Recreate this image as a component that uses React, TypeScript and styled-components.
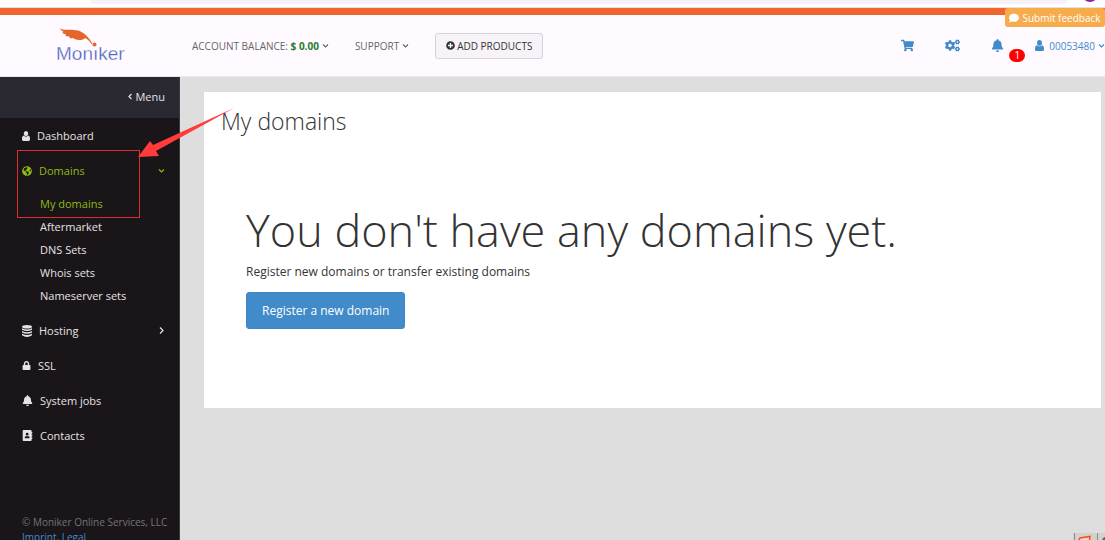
import React from "react";
import styled, { createGlobalStyle } from "styled-components";
import {
  FaAddressBook,
  FaBell,
  FaCogs,
  FaComment,
  FaGlobeAmericas,
  FaLock,
  FaPlusCircle,
  FaShoppingCart,
} from "react-icons/fa";

const GlobalStyle = createGlobalStyle`
  *, *::before, *::after { box-sizing: border-box; }
  body {
    margin: 0;
    font-family: "Open Sans", "Noto Sans", sans-serif;
    font-size: 12px;
    color: #333;
    background: #dedede;
  }
  button { font-family: inherit; cursor: pointer; }
  a { text-decoration: none; }
  svg { flex: none; }
`;

const Page = styled.div`
  position: relative;
  height: 100vh;
  overflow: hidden;
  display: flex;
  flex-direction: column;
`;

const BrowserEdge = styled.div`
  flex: none;
  display: flex;
  align-items: flex-start;
  height: 8px;
  padding: 0 2px 0 90px;
  overflow: hidden;
  background: #fff;
  border-bottom: 1px solid #e6dfdf;
`;

const AddressBar = styled.div`
  flex: 1;
  height: 4px;
  background: #f6f2f7;
  border-radius: 0 0 8px 8px;
`;

const Avatar = styled.span`
  width: 16px;
  height: 16px;
  margin: -14px 5px 0 14px;
  border-radius: 50%;
  background: #8e24aa;
`;

const Header = styled.header`
  flex: none;
  display: flex;
  align-items: center;
  height: 69px;
  padding-left: 56px;
  border-top: 7px solid #f0642f;
  border-bottom: 1px solid #ebe8ec;
  background: #fefaff;
`;

const LogoLink = styled.a`
  display: block;
  width: 68px;
  height: 38px;
  margin-right: 68px;
  svg { display: block; overflow: visible; }
`;

const HeaderLink = styled.a`
  display: flex;
  align-items: center;
  gap: 3px;
  margin-right: 26px;
  font-size: 10px;
  white-space: nowrap;
  color: #666;
  strong { color: #2a7a2e; }
`;

const AddButton = styled.button`
  display: flex;
  align-items: center;
  gap: 2px;
  height: 26px;
  padding: 0 10px;
  font-size: 10px;
  white-space: nowrap;
  color: #333;
  background: #f7f3f8;
  border: 1px solid #d6d2d7;
  border-radius: 3px;
`;

const Tools = styled.nav`
  display: flex;
  align-items: center;
  margin-left: auto;
  color: #428bca;
`;

const ToolButton = styled.button`
  position: relative;
  display: flex;
  padding: 0;
  margin-right: 31px;
  border: 0;
  background: none;
  color: inherit;
`;

const Badge = styled.span`
  position: absolute;
  top: 10px;
  left: 18px;
  width: 16px;
  height: 13px;
  border-radius: 7px;
  background: #f00;
  color: #fff;
  font-size: 10px;
  line-height: 13px;
  text-align: center;
`;

const Account = styled.a`
  display: flex;
  align-items: center;
  font-size: 10px;
  color: #428bca;
  span { margin: 0 3px 0 5px; }
`;

const Feedback = styled.button`
  position: absolute;
  top: 8px;
  right: 0;
  display: flex;
  align-items: center;
  justify-content: center;
  gap: 3px;
  width: 100px;
  height: 19px;
  padding: 0;
  font-size: 10px;
  white-space: nowrap;
  color: #fff;
  background: #f6ac4c;
  border: 0;
  border-radius: 3px;
`;

const Body = styled.div`
  flex: 1;
  display: flex;
  min-height: 0;
`;

const Sidebar = styled.aside`
  flex: none;
  width: 180px;
  background: #1a1518;
  border-right: 1px solid #3d393d;
  color: #e6e2e6;
`;

const Collapse = styled.button`
  display: flex;
  align-items: center;
  justify-content: flex-end;
  gap: 1px;
  width: 100%;
  height: 41px;
  padding: 0 14px 2px;
  font-size: 11px;
  color: #e6e2e6;
  background: #2a2831;
  border: 0;
`;

const MenuItem = styled.a<{ $active?: boolean }>`
  display: flex;
  align-items: center;
  gap: 7px;
  height: 35px;
  padding: 0 14px 0 22px;
  font-size: 11px;
  color: ${(p) => (p.$active ? "#8fbc0f" : "#e6e2e6")};
  svg:last-child { margin-left: auto; }
`;

const SubMenu = styled.div`
  padding: 4px 0 6px;
`;

const SubItem = styled.a<{ $active?: boolean }>`
  display: block;
  padding-left: 40px;
  font-size: 11px;
  line-height: 23px;
  color: ${(p) => (p.$active ? "#8fbc0f" : "#e6e2e6")};
`;

const Legal = styled.footer`
  padding: 62px 0 0 22px;
  font-size: 10px;
  line-height: 15px;
  white-space: nowrap;
  color: #77737a;
  a { color: #428bca; }
`;

const Main = styled.main`
  flex: 1;
  min-width: 0;
  padding: 15px 4px 0 24px;
`;

const Card = styled.section`
  padding: 11px 17px 79px;
  background: #fff;
`;

const Title = styled.h1`
  margin: 0;
  font-size: 23px;
  font-weight: 300;
  line-height: 36px;
`;

const Empty = styled.div`
  padding: 57px 25px 0;
`;

const Lead = styled.h2`
  margin: 0;
  font-size: 45px;
  font-weight: 300;
  line-height: 68px;
`;

const Hint = styled.p`
  margin: 0 0 12px;
  font-size: 12px;
  line-height: 16px;
`;

const Primary = styled.button`
  height: 37px;
  padding: 0 15px;
  font-size: 12px;
  color: #fff;
  background: #428bca;
  border: 1px solid #3d86c6;
  border-radius: 3px;
`;

const Highlight = styled.div`
  position: absolute;
  top: 150px;
  left: 17px;
  width: 123px;
  height: 68px;
  border: 1px solid #d8302f;
  pointer-events: none;
`;

const Arrow = styled.svg`
  position: absolute;
  top: 108px;
  left: 137px;
  pointer-events: none;
`;

const TrayCorner = styled.div`
  position: absolute;
  right: 0;
  bottom: 0;
  width: 32px;
  height: 7px;
  overflow: hidden;
  svg { display: block; }
`;

const subItems = ["My domains", "Aftermarket", "DNS Sets", "Whois sets", "Nameserver sets"];

function Logo() {
  return (
    <svg width="68" height="38" viewBox="0 0 68 38" role="img" aria-label="Moniker">
      <path
        d="M3.500 1.500 C9 4 15 1.500 22 3.500 C28 5.500 32.500 9.500 36.500 17 L35.500 17 C33.500 14 31.500 12 29 11 C27 13.500 22 13.500 18.500 12 L17 11 L14.500 11.500 L13 9.500 L9.500 9 L10 7.500 L6 6 L7.500 5 Z"
        fill="#e5662b"
      />
      <circle cx="38.500" cy="17.500" r="2" fill="#e5662b" />
      <text
        x="0"
        y="33"
        fontFamily="Liberation Sans, Arial, sans-serif"
        fontSize="19"
        fill="#4a63bb"
        stroke="#fefaff"
        strokeWidth="0.300"
      >
        Monıker
      </text>
    </svg>
  );
}

const chevrons = {
  down: "M1 2.500 L3.500 5 L6 2.500",
  left: "M4.500 1 L2 3.500 L4.500 6",
  right: "M2 0.500 L5 3.500 L2 6.500",
};

function Chevron({ to }: { to: keyof typeof chevrons }) {
  return (
    <svg width="7" height="7" viewBox="0 0 7 7" aria-hidden="true">
      <path d={chevrons[to]} fill="none" stroke="currentColor" strokeWidth="1.200" />
    </svg>
  );
}

function Person({ size }: { size: number }) {
  return (
    <svg width={size} height={(size * 10) / 8} viewBox="0 0 8 10" fill="currentColor" aria-hidden="true">
      <ellipse cx="4" cy="2.600" rx="2.200" ry="2.600" />
      <path d="M1.700 4.600 C2.800 6 5.200 6 6.300 4.600 C7.700 4.900 8 6.500 8 8.300 Q8 10 6.700 10 H1.300 Q0 10 0 8.300 C0 6.500 0.300 4.900 1.700 4.600Z" />
    </svg>
  );
}

function Discs() {
  return (
    <svg width="10" height="12" viewBox="0 0 10 12" fill="currentColor" aria-hidden="true">
      <ellipse cx="5" cy="1.800" rx="5" ry="1.800" />
      <path d="M0 3.200 Q5 5.800 10 3.200 V4.700 Q5 7.300 0 4.700Z M0 6 Q5 8.600 10 6 V7.500 Q5 10.100 0 7.500Z M0 8.800 Q5 11.400 10 8.800 V10.300 Q5 13.500 0 10.300Z" />
    </svg>
  );
}

export default function App() {
  return (
    <Page>
      <GlobalStyle />
      <BrowserEdge>
        <AddressBar />
        <Avatar />
      </BrowserEdge>
      <Header>
        <LogoLink href="#home">
          <Logo />
        </LogoLink>
        <HeaderLink href="#balance">
          <span>
            ACCOUNT BALANCE: <strong>$ 0.00</strong>
          </span>
          <Chevron to="down" />
        </HeaderLink>
        <HeaderLink href="#support">
          <span>SUPPORT</span>
          <Chevron to="down" />
        </HeaderLink>
        <AddButton type="button">
          <FaPlusCircle size={9} />
          ADD PRODUCTS
        </AddButton>
        <Tools aria-label="Account">
          <ToolButton type="button" aria-label="Cart">
            <FaShoppingCart size={13} />
          </ToolButton>
          <ToolButton type="button" aria-label="Settings">
            <FaCogs size={15} />
          </ToolButton>
          <ToolButton type="button" aria-label="Notifications">
            <FaBell size={13} />
            <Badge>1</Badge>
          </ToolButton>
          <Account href="#account">
            <Person size={9} />
            <span>00053480</span>
            <Chevron to="down" />
          </Account>
        </Tools>
      </Header>
      <Body>
        <Sidebar>
          <Collapse type="button">
            <Chevron to="left" />
            Menu
          </Collapse>
          <nav aria-label="Main">
            <MenuItem href="#dashboard">
              <Person size={8} />
              <span>Dashboard</span>
            </MenuItem>
            <MenuItem href="#domains" $active>
              <FaGlobeAmericas size={10} />
              <span>Domains</span>
              <Chevron to="down" />
            </MenuItem>
            <SubMenu>
              {subItems.map((label, i) => (
                <SubItem key={label} href={`#${label}`} $active={i === 0}>
                  {label}
                </SubItem>
              ))}
            </SubMenu>
            <MenuItem href="#hosting">
              <Discs />
              <span>Hosting</span>
              <Chevron to="right" />
            </MenuItem>
            <MenuItem href="#ssl">
              <FaLock size={9} />
              <span>SSL</span>
            </MenuItem>
            <MenuItem href="#jobs">
              <FaBell size={11} />
              <span>System jobs</span>
            </MenuItem>
            <MenuItem href="#contacts">
              <FaAddressBook size={11} />
              <span>Contacts</span>
            </MenuItem>
          </nav>
          <Legal>
            <div>© Moniker Online Services, LLC</div>
            <a href="#imprint">Imprint</a>, <a href="#legal">Legal</a>
          </Legal>
        </Sidebar>
        <Main>
          <Card>
            <Title>My domains</Title>
            <Empty>
              <Lead>You don't have any domains yet.</Lead>
              <Hint>Register new domains or transfer existing domains</Hint>
              <Primary type="button">Register a new domain</Primary>
            </Empty>
          </Card>
        </Main>
      </Body>
      <Feedback type="button">
        <FaComment size={10} />
        Submit feedback
      </Feedback>
      <Highlight />
      <Arrow width="98" height="52" viewBox="0 0 98 52" aria-hidden="true">
        <path d="M97 0 L16 37 L13 33 L1 49 L22 48 L19 43 Z" fill="#ff3b3b" />
      </Arrow>
      <TrayCorner>
        <svg width="32" height="7" viewBox="0 0 32 7" aria-hidden="true">
          <rect width="32" height="7" fill="#d4d0cd" />
          <path d="M1.500 0V7M24.500 0V7" stroke="#8e8b89" />
          <path d="M6 7 L7 5 L17 3.500 L16.500 7" stroke="#f2511b" strokeWidth="1.500" fill="#f9d9cc" />
          <circle cx="33" cy="8" r="4" fill="#666" />
        </svg>
      </TrayCorner>
    </Page>
  );
}
